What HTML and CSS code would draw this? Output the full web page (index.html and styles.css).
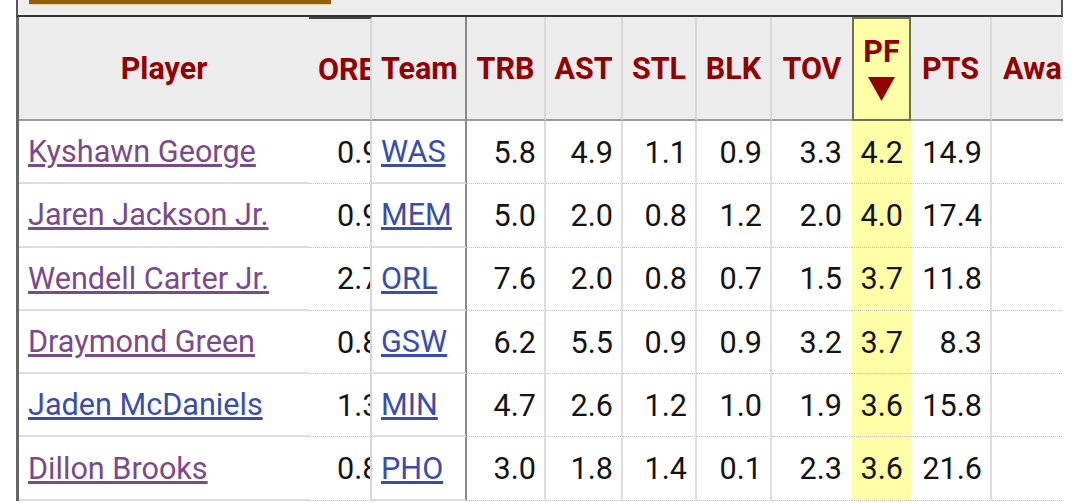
FILE: index.html
```html
<!DOCTYPE html>
<html lang="en">
<head>
<meta charset="utf-8">
<title>Per Game Stats</title>
<link rel="stylesheet" href="styles.css">
</head>
<body>
<div class="board">
  <div class="tabs"><div class="tab-active"></div></div>
  <div class="scroll">
    <div class="grid" role="table">
      <div class="h player-h">Player</div>
      <div class="h orb">ORB</div>
      <div class="h team team-h">Team</div>
      <div class="h num-h">TRB</div>
      <div class="h num-h">AST</div>
      <div class="h num-h">STL</div>
      <div class="h num-h">BLK</div>
      <div class="h num-h tov">TOV</div>
      <div class="h pf-h"><span>PF</span><svg class="arrow" width="27" height="24" viewBox="0 0 27 24"><polygon points="0,0 27,0 13.5,24" fill="#900000"/></svg></div>
      <div class="h num-h">PTS</div>
      <div class="h aw-h">Awards</div>

      <div class="c player"><a class="visited" href="#">Kyshawn George</a></div>
      <div class="c orb">0.9</div>
      <div class="c team"><a href="#">WAS</a></div>
      <div class="c num">5.8</div>
      <div class="c num">4.9</div>
      <div class="c num">1.1</div>
      <div class="c num">0.9</div>
      <div class="c num tov">3.3</div>
      <div class="c num pf">4.2</div>
      <div class="c num">14.9</div>
      <div class="c aw"></div>

      <div class="c player"><a class="visited" href="#">Jaren Jackson Jr.</a></div>
      <div class="c orb">0.9</div>
      <div class="c team"><a href="#">MEM</a></div>
      <div class="c num">5.0</div>
      <div class="c num">2.0</div>
      <div class="c num">0.8</div>
      <div class="c num">1.2</div>
      <div class="c num tov">2.0</div>
      <div class="c num pf">4.0</div>
      <div class="c num">17.4</div>
      <div class="c aw"></div>

      <div class="c player"><a class="visited" href="#">Wendell Carter Jr.</a></div>
      <div class="c orb">2.7</div>
      <div class="c team"><a href="#">ORL</a></div>
      <div class="c num">7.6</div>
      <div class="c num">2.0</div>
      <div class="c num">0.8</div>
      <div class="c num">0.7</div>
      <div class="c num tov">1.5</div>
      <div class="c num pf">3.7</div>
      <div class="c num">11.8</div>
      <div class="c aw"></div>

      <div class="c player"><a class="visited" href="#">Draymond Green</a></div>
      <div class="c orb">0.8</div>
      <div class="c team"><a href="#">GSW</a></div>
      <div class="c num">6.2</div>
      <div class="c num">5.5</div>
      <div class="c num">0.9</div>
      <div class="c num">0.9</div>
      <div class="c num tov">3.2</div>
      <div class="c num pf">3.7</div>
      <div class="c num">8.3</div>
      <div class="c aw"></div>

      <div class="c player"><a href="#">Jaden McDaniels</a></div>
      <div class="c orb">1.3</div>
      <div class="c team"><a href="#">MIN</a></div>
      <div class="c num">4.7</div>
      <div class="c num">2.6</div>
      <div class="c num">1.2</div>
      <div class="c num">1.0</div>
      <div class="c num tov">1.9</div>
      <div class="c num pf">3.6</div>
      <div class="c num">15.8</div>
      <div class="c aw"></div>

      <div class="c player"><a class="visited" href="#">Dillon Brooks</a></div>
      <div class="c orb">0.8</div>
      <div class="c team"><a href="#">PHO</a></div>
      <div class="c num">3.0</div>
      <div class="c num">1.8</div>
      <div class="c num">1.4</div>
      <div class="c num">0.1</div>
      <div class="c num tov">2.3</div>
      <div class="c num pf">3.6</div>
      <div class="c num">21.6</div>
      <div class="c aw"></div>
    </div>
  </div>
</div>
</body>
</html>
```

FILE: styles.css
```css
* { box-sizing: border-box; }

html, body {
  margin: 0;
  padding: 0;
  background: #ffffff;
  font-family: Roboto, "Noto Sans", "Liberation Sans", sans-serif;
  overflow: hidden;
}

.board {
  margin-left: 16px;
  width: 1047px;
}

.tabs {
  height: 17px;
  background: #eeeeee;
  border-left: 2px solid #555555;
  border-right: 2px solid #555555;
  border-bottom: 2px solid #333333;
  padding-left: 11px;
}

.tab-active {
  width: 302px;
  height: 4px;
  background: #925e0c;
  box-shadow: 0 1px 0 #e9cc9a;
}

.scroll {
  border-left: 3px solid #666666;
  overflow: hidden;
}

.grid {
  display: grid;
  grid-template-columns: 290px 63px 95px 79px 77px 74px 75px 80px 59px 81px 140px;
  grid-template-rows: 104px repeat(6, 63.3px);
  width: 1043px;
}

.h {
  background: #ececec;
  border-bottom: 2px solid #9c9c9c;
  color: #930000;
  font-weight: 700;
  font-size: 30.5px;
  display: flex;
  align-items: center;
  justify-content: center;
  white-space: nowrap;
  overflow: hidden;
}

.c {
  display: flex;
  align-items: center;
  font-size: 30.6px;
  color: #141414;
  white-space: nowrap;
  overflow: hidden;
  border-bottom: 1px dotted #bdbdbd;
}

a {
  color: #3a4dab;
  text-decoration: underline;
}

a.visited { color: #7a4a8b; }

.player {
  padding-left: 9px;
  border-bottom: 2px solid #dddddd;
}

.orb {
  justify-content: flex-start;
  padding-left: 28px;
  border-right: 2px solid #d6d6d6;
}

.h.orb {
  padding-left: 9px;
  border-top: 2px solid #444444;
}

.team {
  justify-content: flex-start;
  padding-left: 9px;
  border-right: 2px solid #8a8a8a;
  border-bottom: 2px solid #dddddd;
}

.h.team-h {
  border-bottom: 2px solid #9c9c9c;
}

.num-h {
  border-right: 2px solid #d8d8d8;
}

.num {
  justify-content: flex-end;
  padding-right: 8px;
  border-right: 2px solid #dddddd;
}

.tov {
  border-right: none;
  padding-right: 10px;
}

.h.tov { padding-right: 0; }

.pf {
  background: #ffffa8;
  border-right: none;
  padding-right: 8px;
}

.pf-h {
  background: #ffffa8;
  border: 2px solid #707052;
  flex-direction: column;
  gap: 12px;
  padding-top: 2px;
  padding-bottom: 0;
}

.pf-h span {
  line-height: 26px;
}

.arrow { display: block; }

.aw-h {
  justify-content: flex-start;
  padding-left: 11px;
}
```
